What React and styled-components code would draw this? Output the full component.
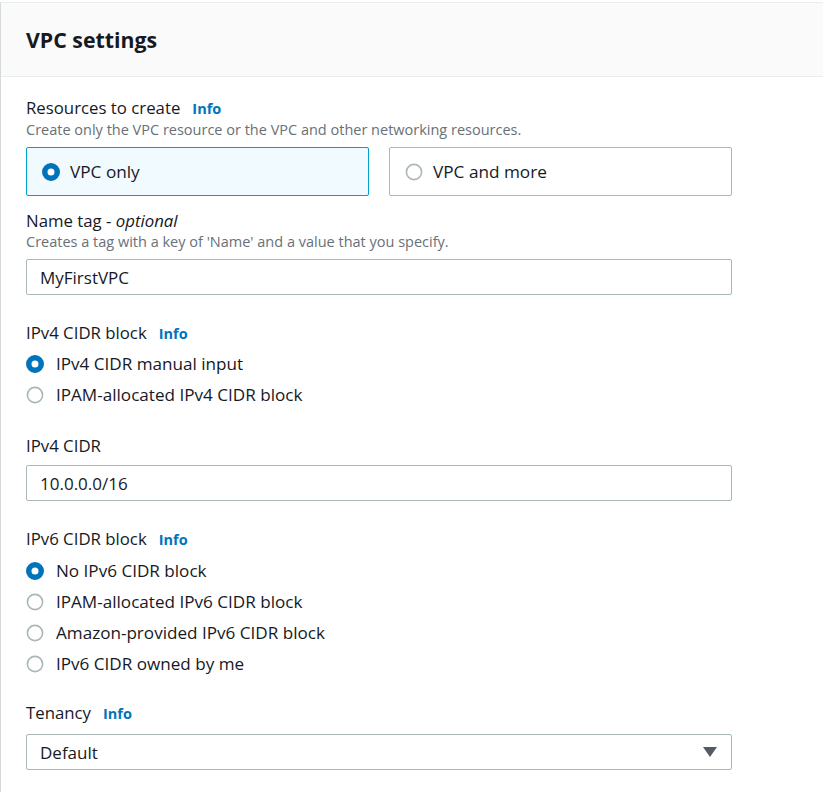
import React from 'react';
import styled, { createGlobalStyle } from 'styled-components';

const GlobalStyle = createGlobalStyle`
  body {
    margin: 0;
    background: #ffffff;
    font-family: "Open Sans", "Noto Sans", Arial, sans-serif;
    color: #16191f;
  }
`;

const Panel = styled.div`
  margin-top: 2px;
  border-top: 1px solid #eaeded;
  border-left: 1px solid #d5dbdb;
  min-height: 789px;
`;

const Header = styled.div`
  display: flex;
  align-items: center;
  height: 73px;
  padding-left: 25px;
  background: #fafafa;
  border-bottom: 1px solid #eaeded;
`;

const Title = styled.h2`
  margin: 0;
  font-size: 21.3px;
  font-weight: 700;
  color: #16191f;
`;

const Body = styled.div`
  display: flex;
  flex-direction: column;
  width: 706px;
  padding: 20px 0 0 25px;
`;

const Field = styled.div`
  display: flex;
  flex-direction: column;
  margin-top: ${({ $gap }) => $gap || 0}px;
`;

const Label = styled.div`
  display: flex;
  align-items: baseline;
  gap: 12px;
  font-size: 16.8px;
  line-height: 22px;
  color: #16191f;
`;

const Info = styled.a`
  font-size: 14.5px;
  font-weight: 700;
  color: #0073bb;
  text-decoration: none;
`;

const Optional = styled.i`
  font-style: italic;
`;

const Description = styled.div`
  font-size: 14.5px;
  line-height: 20px;
  color: #687078;
`;

const Tiles = styled.div`
  display: grid;
  grid-template-columns: 1fr 1fr;
  gap: 20px;
  margin-top: 7px;
`;

const Tile = styled.div`
  display: flex;
  align-items: center;
  gap: 10px;
  height: 49px;
  box-sizing: border-box;
  padding-left: 15px;
  border: 1px solid ${({ $selected }) => ($selected ? '#00a1c9' : '#aab7b8')};
  border-radius: 2px;
  background: ${({ $selected }) => ($selected ? '#f1faff' : '#ffffff')};
  font-size: 17.2px;
`;

const Input = styled.div`
  display: flex;
  align-items: center;
  height: 36px;
  box-sizing: border-box;
  margin-top: ${({ $gap }) => $gap || 8}px;
  padding: 0 14px 0 13px;
  border: 1px solid #aab7b8;
  border-radius: 2px;
  font-size: 17px;
  color: #16191f;
`;

const Select = styled(Input)`
  justify-content: space-between;
`;

const RadioGroup = styled.div`
  display: flex;
  flex-direction: column;
  margin-top: ${({ $gap }) => $gap || 4}px;
`;

const RadioRow = styled.div`
  display: flex;
  align-items: center;
  gap: 12px;
  height: 31px;
  font-size: 17.1px;
`;

function Radio({ checked }) {
  return (
    <svg width="18" height="18" viewBox="0 0 18 18">
      {checked ? (
        <circle cx="9" cy="9" r="6.25" fill="#ffffff" stroke="#0073bb" strokeWidth="5.5" />
      ) : (
        <circle cx="9" cy="9" r="7.6" fill="#ffffff" stroke="#aab7b8" strokeWidth="1.6" />
      )}
    </svg>
  );
}

function Caret() {
  return (
    <svg width="14" height="10" viewBox="0 0 14 10">
      <path d="M0 0 H14 L7 10 Z" fill="#545b64" />
    </svg>
  );
}

const ipv4Options = [
  { label: 'IPv4 CIDR manual input', checked: true },
  { label: 'IPAM-allocated IPv4 CIDR block' },
];

const ipv6Options = [
  { label: 'No IPv6 CIDR block', checked: true },
  { label: 'IPAM-allocated IPv6 CIDR block' },
  { label: 'Amazon-provided IPv6 CIDR block' },
  { label: 'IPv6 CIDR owned by me' },
];

export default function App() {
  return (
    <>
      <GlobalStyle />
      <Panel>
        <Header>
          <Title>VPC settings</Title>
        </Header>
        <Body>
          <Field>
            <Label>
              Resources to create <Info>Info</Info>
            </Label>
            <Description>Create only the VPC resource or the VPC and other networking resources.</Description>
            <Tiles>
              <Tile $selected>
                <Radio checked />
                VPC only
              </Tile>
              <Tile>
                <Radio />
                VPC and more
              </Tile>
            </Tiles>
          </Field>

          <Field $gap={14}>
            <Label>
              <span>
                Name tag - <Optional>optional</Optional>
              </span>
            </Label>
            <Description>Creates a tag with a key of 'Name' and a value that you specify.</Description>
            <Input $gap={7}>MyFirstVPC</Input>
          </Field>

          <Field $gap={27}>
            <Label>
              IPv4 CIDR block <Info>Info</Info>
            </Label>
            <RadioGroup $gap={3}>
              {ipv4Options.map((o) => (
                <RadioRow key={o.label}>
                  <Radio checked={o.checked} />
                  {o.label}
                </RadioRow>
              ))}
            </RadioGroup>
          </Field>

          <Field $gap={25}>
            <Label>IPv4 CIDR</Label>
            <Input>10.0.0.0/16</Input>
          </Field>

          <Field $gap={27}>
            <Label>
              IPv6 CIDR block <Info>Info</Info>
            </Label>
            <RadioGroup>
              {ipv6Options.map((o) => (
                <RadioRow key={o.label}>
                  <Radio checked={o.checked} />
                  {o.label}
                </RadioRow>
              ))}
            </RadioGroup>
          </Field>

          <Field $gap={23}>
            <Label>
              Tenancy <Info>Info</Info>
            </Label>
            <Select $gap={9}>
              Default
              <Caret />
            </Select>
          </Field>
        </Body>
      </Panel>
    </>
  );
}
